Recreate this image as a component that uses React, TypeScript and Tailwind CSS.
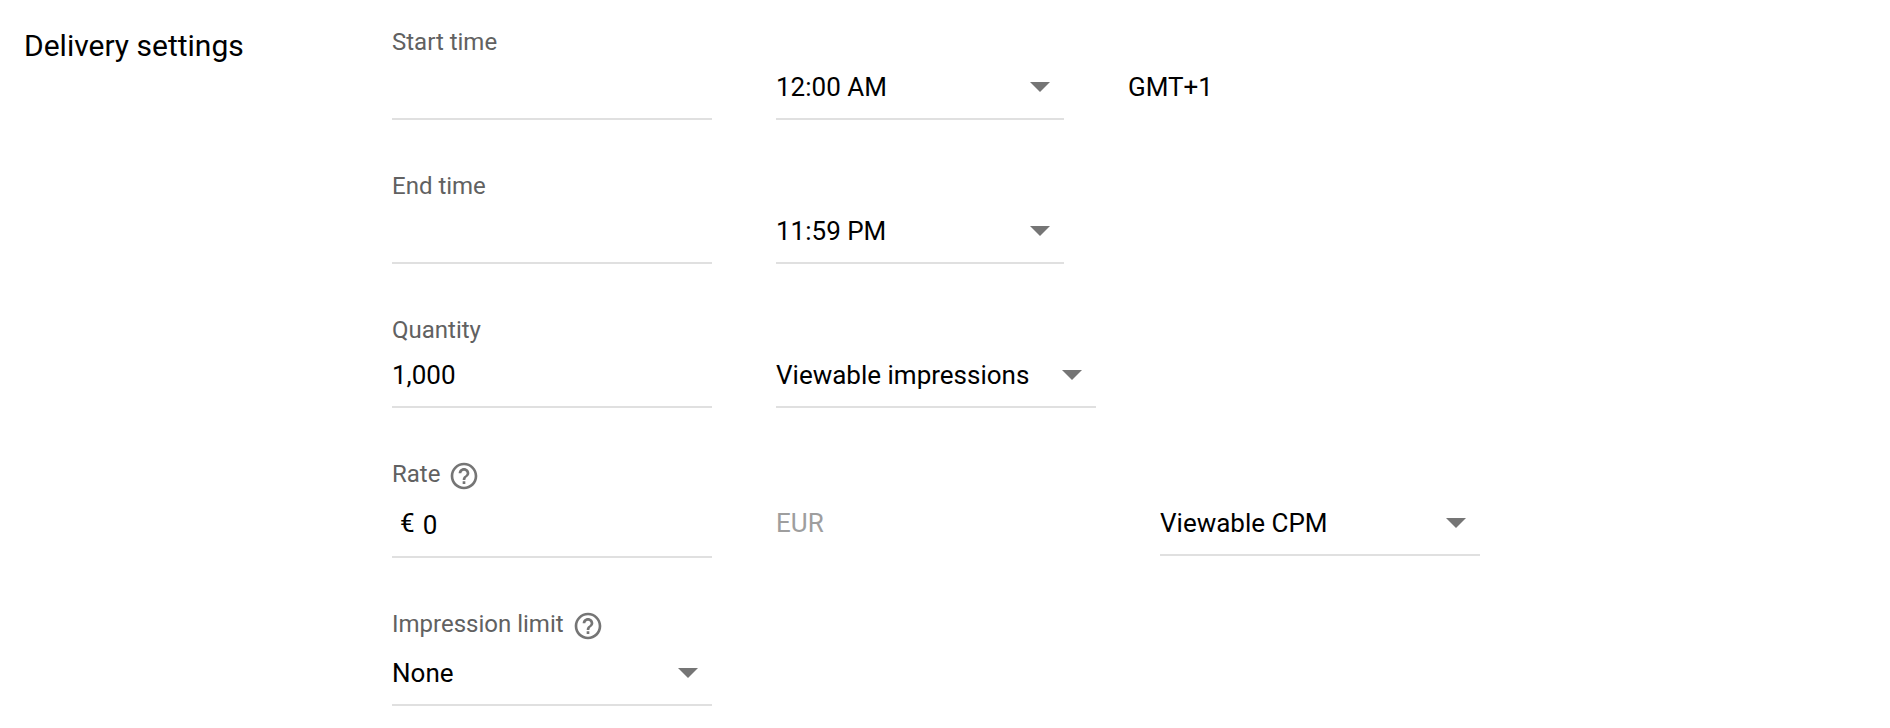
import { ReactNode } from "react";
import { MdHelpOutline } from "react-icons/md";
import clsx from "clsx";

interface FieldRowProps {
  label: string;
  htmlFor: string;
  help?: boolean;
  children: ReactNode;
}

interface SelectFieldProps {
  id: string;
  options: string[];
  label?: string;
  className?: string;
}

interface TextFieldProps {
  id: string;
  defaultValue?: string;
}

const FieldRow = ({ label, htmlFor, help, children }: FieldRowProps) => (
  <div>
    <div className="mb-3.5 flex items-center gap-2">
      <label
        htmlFor={htmlFor}
        className="self-start text-2xl leading-8 text-[#616161]"
      >
        {label}
      </label>
      {help && (
        <button
          type="button"
          aria-label={`Help for ${label}`}
          className="flex h-9 items-center text-[#757575]"
        >
          <MdHelpOutline size={32} />
        </button>
      )}
    </div>
    <div className="flex flex-wrap items-start gap-x-16 gap-y-4">
      {children}
    </div>
  </div>
);

const TextField = ({ id, defaultValue }: TextFieldProps) => (
  <input
    id={id}
    type="text"
    defaultValue={defaultValue}
    className="h-12 w-80 border-b-2 border-[#e0e0e0] pb-4 outline-none"
  />
);

const SelectField = ({
  id,
  options,
  label,
  className = "w-80",
}: SelectFieldProps) => (
  <div className={clsx("relative", className)}>
    <select
      id={id}
      aria-label={label}
      className="block h-12 w-full appearance-none border-b-2 border-[#e0e0e0] bg-transparent pr-12 pb-4 outline-none"
    >
      {options.map((option) => (
        <option key={option}>{option}</option>
      ))}
    </select>
    <svg
      viewBox="0 0 20 10"
      className="pointer-events-none absolute top-2.5 right-3.5 h-2.5 w-5 fill-[#757575]"
      aria-hidden="true"
    >
      <path d="M0 0l10 10L20 0z" />
    </svg>
  </div>
);

export default function App() {
  return (
    <main className="flex items-start bg-white px-6 pt-[26px] font-['Roboto',sans-serif] text-[26px] leading-[30px] text-black">
      <h2 className="w-[368px] shrink-0 text-3xl leading-10">
        Delivery settings
      </h2>
      <form className="flex min-w-0 flex-1 flex-col gap-[50px]">
        <FieldRow label="Start time" htmlFor="start-date">
          <TextField id="start-date" />
          <SelectField
            id="start-time"
            label="Start time of day"
            options={["12:00 AM", "6:00 AM", "12:00 PM", "6:00 PM"]}
            className="w-72"
          />
          <span>GMT+1</span>
        </FieldRow>

        <FieldRow label="End time" htmlFor="end-date">
          <TextField id="end-date" />
          <SelectField
            id="end-time"
            label="End time of day"
            options={["11:59 PM", "6:00 AM", "12:00 PM", "6:00 PM"]}
            className="w-72"
          />
        </FieldRow>

        <FieldRow label="Quantity" htmlFor="quantity">
          <TextField id="quantity" defaultValue="1,000" />
          <SelectField
            id="quantity-unit"
            label="Quantity unit"
            options={["Viewable impressions", "Impressions", "Clicks"]}
          />
        </FieldRow>

        <FieldRow label="Rate" htmlFor="rate" help>
          <div className="flex w-80 gap-2 border-b-2 border-[#e0e0e0] pl-2">
            <span>€</span>
            <input
              id="rate"
              type="text"
              defaultValue="0"
              className="h-12 min-w-0 flex-1 pt-0.5 pb-4 outline-none"
            />
          </div>
          <span className="w-80 text-[#9e9e9e]">EUR</span>
          <SelectField
            id="rate-type"
            label="Rate type"
            options={["Viewable CPM", "CPM", "CPC"]}
          />
        </FieldRow>

        <FieldRow label="Impression limit" htmlFor="impression-limit" help>
          <SelectField
            id="impression-limit"
            options={["None", "Daily", "Lifetime"]}
          />
        </FieldRow>
      </form>
    </main>
  );
}
